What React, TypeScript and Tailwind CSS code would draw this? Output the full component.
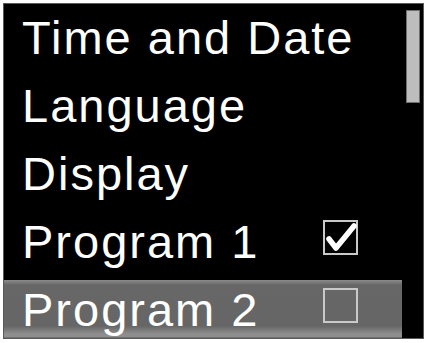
import React from 'react';

type Item = { label: string; checked?: boolean };

const items: Item[] = [
  { label: 'Time and Date' },
  { label: 'Language' },
  { label: 'Display' },
  { label: 'Program 1', checked: true },
  { label: 'Program 2', checked: false },
];

const SELECTED = 4;

const CheckBox: React.FC<{ checked: boolean }> = ({ checked }) => (
  <div className="relative mt-[8px] mr-[44px] h-[35px] w-[35px] shrink-0 border-2 border-[#c9c9c9]">
    {checked && (
      <svg viewBox="0 0 35 35" className="absolute -left-[2px] -top-[2px] h-[35px] w-[35px]">
        <path
          d="M6 19 L13 28 L31 6"
          fill="none"
          stroke="#ffffff"
          strokeWidth="5.5"
          strokeLinecap="round"
          strokeLinejoin="round"
        />
      </svg>
    )}
  </div>
);

export default function App() {
  return (
    <div className="h-[343px] w-[428px] bg-white pl-[3px] pt-[3px]">
      <div className="flex h-[336px] w-[421px] overflow-hidden border border-[#5a5a5a] bg-black">
        <div className="w-[398px] overflow-hidden pt-[4px]">
          {items.map((item, i) => (
            <div
              key={item.label}
              className={
                i === SELECTED
                  ? 'flex h-[68px] items-start bg-[linear-gradient(to_bottom,#8c8c8c_0px,#676767_5px,#666666_46px,#8e8e8e_54px,#8e8e8e_57px,#555555_58px)] pl-[18px]'
                  : 'flex h-[68px] items-start pl-[18px]'
              }
            >
              <span
                className="flex-1 text-[47px] leading-[60px] tracking-[2px] text-white"
                style={{ fontFamily: '"Liberation Sans", Arial, sans-serif' }}
              >
                {item.label}
              </span>
              {item.checked !== undefined && <CheckBox checked={item.checked} />}
            </div>
          ))}
        </div>
        <div className="flex-1 pl-[4px] pt-[6px]">
          <div className="h-[93px] w-[14px] border border-[#6e6e6e] bg-[#bdbdbd]" />
        </div>
      </div>
    </div>
  );
}
